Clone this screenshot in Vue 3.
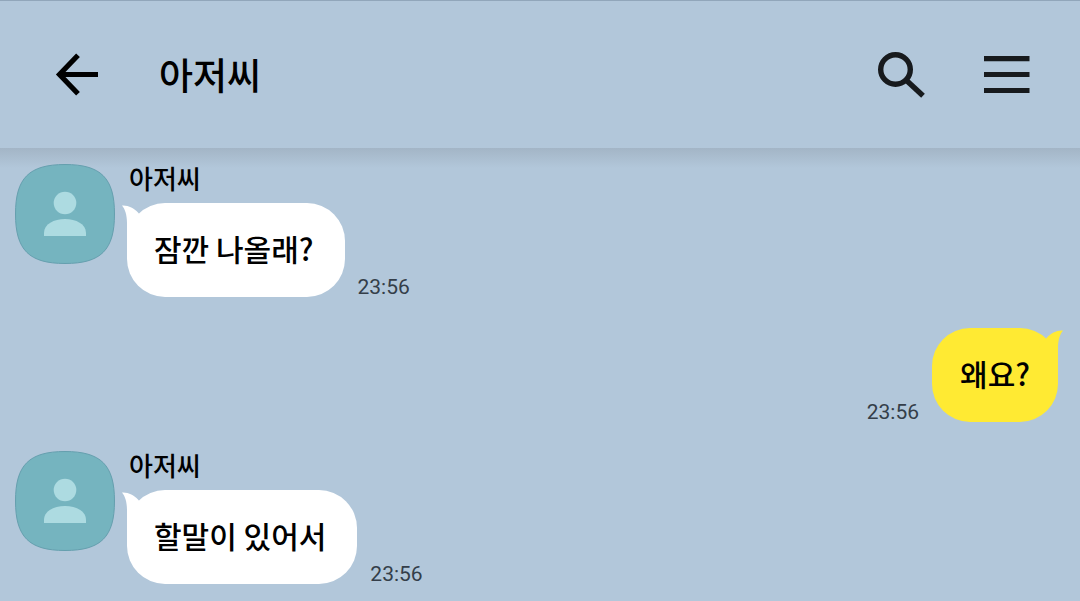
<script setup>
const contact = '아저씨'

const messages = [
  { id: 1, mine: false, text: '잠깐 나올래?', time: '23:56' },
  { id: 2, mine: true, text: '왜요?', time: '23:56' },
  { id: 3, mine: false, text: '할말이 있어서', time: '23:56' },
]
</script>

<template>
  <div class="chat">
    <header class="bar">
      <button class="icon-button back" type="button" aria-label="뒤로">
        <svg width="44" height="44" viewBox="0 0 44 44" fill="none" stroke="#000" stroke-width="5.2">
          <path d="M23 2.200 4.500 21.500 23 40.800M5 21.500H43" />
        </svg>
      </button>
      <h1 class="title">{{ contact }}</h1>
      <button class="icon-button" type="button" aria-label="검색">
        <svg width="48" height="48" viewBox="0 0 48 48" fill="none" stroke="#171a1d" stroke-width="5.4">
          <circle cx="17.500" cy="18.500" r="14.800" />
          <path d="M28 29 45 44.800" />
        </svg>
      </button>
      <button class="icon-button menu" type="button" aria-label="메뉴">
        <svg width="46" height="38" viewBox="0 0 46 38" fill="#171a1d">
          <path d="M0 0h45.500v5.300H0zM0 16h45.500v5H0zM0 32h45.500v5H0z" />
        </svg>
      </button>
    </header>

    <main class="messages">
      <article v-for="m in messages" :key="m.id" class="message" :class="{ mine: m.mine }">
        <svg v-if="!m.mine" class="avatar" width="100" height="100" viewBox="0 0 100 100" aria-hidden="true">
          <path
            d="M50 .5C86 .5 99.500 14 99.500 50S86 99.500 50 99.500.5 86 .5 50 14 .5 50 .5Z"
            fill="#75b4bf"
            stroke="#659fae"
          />
          <circle cx="50" cy="39" r="11.300" fill="#addbe1" />
          <path d="M29 72V69C29 60 39 55 50 55S71 60 71 69V72Z" fill="#addbe1" />
        </svg>
        <div class="content">
          <h2 v-if="!m.mine" class="name">{{ contact }}</h2>
          <div class="line">
            <p class="bubble">
              <svg class="tail" width="24" height="42" viewBox="0 0 24 42" aria-hidden="true">
                <path d="M0 2.500C6 2 12 5 16 9.500L24 20V42H5V20C5 12 3 6 0 2.500Z" />
              </svg>
              <span class="text">{{ m.text }}</span>
            </p>
            <time class="time">{{ m.time }}</time>
          </div>
        </div>
      </article>
    </main>
  </div>
</template>

<style>
body {
  margin: 0;
  background: #b2c7da;
}
</style>

<style scoped>
.chat {
  min-height: 100vh;
  box-sizing: border-box;
  overflow: hidden;
  color: #000;
  background: #b2c7da;
  font-family: "Noto Sans CJK KR", sans-serif;
}

.bar {
  display: flex;
  align-items: center;
  box-sizing: border-box;
  height: 148px;
  padding: 0 50px 0 55px;
  border-top: 1px solid #91a6ba;
}

.icon-button {
  display: flex;
  padding: 0;
  border: 0;
  background: none;
  cursor: pointer;
}

.title {
  flex: 1;
  margin: 0 0 2px 60px;
  font-size: 37px;
  font-weight: 500;
  line-height: 48px;
}

.menu {
  margin-left: 58px;
}

.messages {
  display: flex;
  flex-direction: column;
  gap: 29px;
  padding: 16px 22px 17px 15px;
  background: linear-gradient(#a3b5c6, #b2c7da 20px);
}

.message {
  display: flex;
  gap: 12px;
}

.avatar {
  flex: none;
}

.name {
  margin: 0 0 11px 2px;
  font-size: 26px;
  font-weight: 500;
  line-height: 28px;
}

.line {
  display: flex;
  align-items: flex-end;
  gap: 13px;
}

.bubble {
  position: relative;
  margin: 0;
  padding: 23px 31px 27px 27px;
  border-radius: 38px;
  background: #fff;
  font-size: 30px;
  font-weight: 500;
  line-height: 44px;
}

.tail {
  position: absolute;
  top: 0;
  left: -5px;
  fill: #fff;
}

.text {
  position: relative;
}

.time {
  color: #343e49;
  font-family: Roboto, sans-serif;
  font-size: 21px;
  line-height: 20px;
}

.mine {
  justify-content: flex-end;
  padding-top: 2px;
}

.mine .line {
  flex-direction: row-reverse;
}

.mine .bubble {
  padding-right: 28px;
  padding-left: 28px;
  background: #ffea33;
}

.mine .tail {
  right: -5px;
  left: auto;
  fill: #ffea33;
  transform: scaleX(-1);
}
</style>
